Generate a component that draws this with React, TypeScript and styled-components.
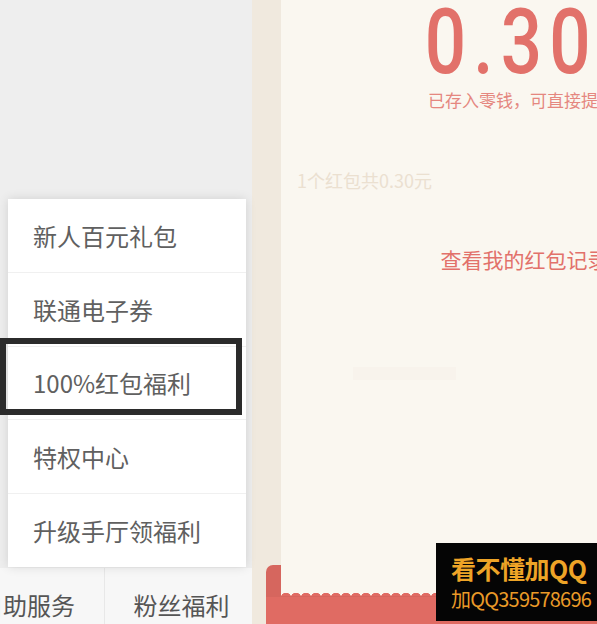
import React from "react";
import styled, { createGlobalStyle } from "styled-components";

const GlobalStyle = createGlobalStyle`
  html, body {
    margin: 0;
    padding: 0;
    background: #eeeeee;
  }
  body {
    font-family: "Noto Sans CJK SC", "Noto Sans", sans-serif;
  }
`;

const Page = styled.div`
  position: relative;
  display: flex;
  width: 597px;
  height: 624px;
  overflow: hidden;
`;

/* left side: page behind the popup */
const LeftPane = styled.div`
  flex: 0 0 252px;
  display: flex;
  flex-direction: column;
  justify-content: flex-end;
  background: #eeeeee;
  overflow: hidden;
`;

const BottomNav = styled.div`
  display: flex;
  height: 56px;
  margin-left: -50px;
  background: #f7f7f7;
`;

const NavItem = styled.div`
  flex: 0 0 154px;
  display: flex;
  justify-content: center;
  padding-top: 25px;
  box-sizing: border-box;
  font-size: 24px;
  line-height: 24px;
  color: #555555;
  & + & {
    border-left: 1px solid #e8e8e8;
  }
`;

/* right side: red packet result */
const RightPane = styled.div`
  flex: 0 0 490px;
  display: flex;
  flex-direction: column;
`;

const Upper = styled.div`
  flex: 1;
  display: flex;
`;

const Strip = styled.div`
  flex: 0 0 29px;
  background: #f0e9de;
`;

const Card = styled.div`
  flex: 1;
  display: flex;
  flex-direction: column;
  align-items: center;
  background: #faf7f0;
`;

const Amount = styled.div`
  margin-top: 2px;
  font-family: Roboto, "Liberation Sans", sans-serif;
  font-size: 91px;
  font-weight: 500;
  line-height: 80px;
  letter-spacing: 9px;
  color: #e2716a;
  transform: scaleX(0.8);
`;

const Hint = styled.div`
  margin-top: 8px;
  margin-left: 20px;
  font-size: 17px;
  line-height: 20px;
  color: #e5877f;
`;

const Summary = styled.div`
  align-self: stretch;
  margin-top: 59px;
  padding-left: 16px;
  font-size: 18px;
  line-height: 22px;
  color: #ebe0d0;
`;

const RecordLink = styled.div`
  margin-top: 55px;
  margin-left: 26px;
  font-size: 21px;
  line-height: 26px;
  color: #e2716a;
`;

const GhostBar = styled.div`
  margin-top: 95px;
  margin-right: 214px;
  width: 103px;
  height: 13px;
  background: #f8f3ec;
`;

const Envelope = styled.div`
  flex: 0 0 59px;
  display: flex;
  padding-left: 14px;
  background: #f0e9de;
`;

const RedBody = styled.div`
  flex: 1;
  display: flex;
  align-items: flex-start;
  padding-left: 15px;
  border-top-left-radius: 7px;
  background: linear-gradient(to bottom, #d6665e 0 32px, #e06b63 32px);
`;

const CardTail = styled.div`
  position: relative;
  flex: 1;
  height: 31px;
  background: #faf7f0;
  &::after {
    content: "";
    position: absolute;
    left: 0;
    right: 0;
    bottom: 0;
    height: 5px;
    background: radial-gradient(circle at 5px 7px, #e06b63 5px, transparent 5.5px) 0 0 / 10px 5px repeat-x;
  }
`;

/* popup menu over the page */
const Menu = styled.div`
  position: absolute;
  left: 8px;
  top: 199px;
  width: 238px;
  height: 368px;
  display: flex;
  flex-direction: column;
  background: #ffffff;
  box-shadow: 0 0 10px rgba(0, 0, 0, 0.12);
`;

const MenuItem = styled.div`
  flex: 1;
  display: flex;
  align-items: center;
  padding-left: 25px;
  font-size: 24px;
  color: #606060;
  & + & {
    border-top: 1px solid #f0f0f0;
  }
`;

const Highlight = styled.div`
  position: absolute;
  left: 0;
  top: 338px;
  width: 242px;
  height: 77px;
  box-sizing: border-box;
  border: 6px solid #2b2b2b;
`;

const Watermark = styled.div`
  position: absolute;
  right: 0;
  top: 543px;
  width: 161px;
  height: 78px;
  box-sizing: border-box;
  padding: 10px 0 0 15px;
  background: #050505;
  color: #eea427;
`;

const MarkTitle = styled.div`
  font-size: 25px;
  line-height: 30px;
  font-weight: 700;
  letter-spacing: -0.5px;
`;

const MarkLine = styled.div`
  margin-top: 4px;
  font-size: 20px;
  line-height: 24px;
  letter-spacing: -0.8px;
  color: #ea9a28;
`;

const menuItems = ["新人百元礼包", "联通电子券", "100%红包福利", "特权中心", "升级手厅领福利"];

export default function App() {
  return (
    <>
      <GlobalStyle />
      <Page>
        <LeftPane>
          <BottomNav>
            <NavItem>自助服务</NavItem>
            <NavItem>粉丝福利</NavItem>
          </BottomNav>
        </LeftPane>
        <RightPane>
          <Upper>
            <Strip />
            <Card>
              <Amount>0.30</Amount>
              <Hint>已存入零钱，可直接提现</Hint>
              <Summary>1个红包共0.30元</Summary>
              <RecordLink>查看我的红包记录</RecordLink>
              <GhostBar />
            </Card>
          </Upper>
          <Envelope>
            <RedBody>
              <CardTail />
            </RedBody>
          </Envelope>
        </RightPane>
        <Menu>
          {menuItems.map((item) => (
            <MenuItem key={item}>{item}</MenuItem>
          ))}
        </Menu>
        <Highlight />
        <Watermark>
          <MarkTitle>看不懂加QQ</MarkTitle>
          <MarkLine>加QQ359578696</MarkLine>
        </Watermark>
      </Page>
    </>
  );
}
